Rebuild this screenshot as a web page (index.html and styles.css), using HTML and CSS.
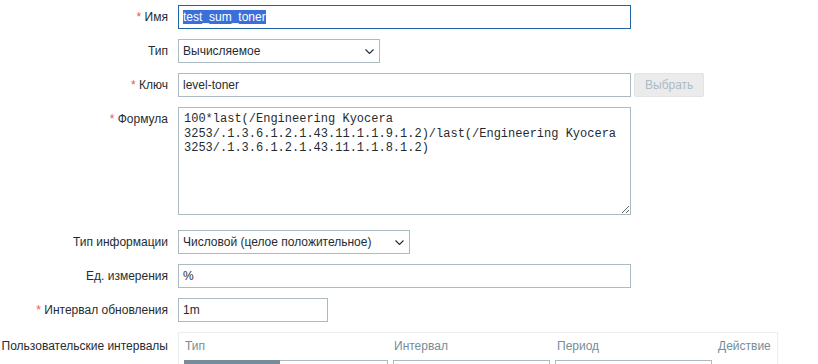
FILE: index.html
```html
<!DOCTYPE html>
<html lang="ru">
<head>
    <meta charset="UTF-8">
    <meta name="viewport" content="width=device-width, initial-scale=1.0">
    <title>Элемент данных</title>
    <link rel="stylesheet" href="styles.css">
</head>
<body>
    <form class="item-form">
        <!-- Имя -->
        <label class="form-label" for="name-input"><span class="req">*</span> Имя</label>
        <div class="form-field">
            <input type="text" id="name-input" class="text-input input-wide input-focused" value="test_sum_toner">
        </div>

        <!-- Тип -->
        <label class="form-label">Тип</label>
        <div class="form-field">
            <div class="select-wrap select-type">
                <select class="select-input">
                    <option>Вычисляемое</option>
                </select>
                <svg class="select-arrow" width="9" height="5" viewBox="0 0 9 5"><path d="M0.5 0.5 L4.5 4.5 L8.5 0.5" fill="none" stroke="#1f2c33" stroke-width="1.1"/></svg>
            </div>
        </div>

        <!-- Ключ -->
        <label class="form-label"><span class="req">*</span> Ключ</label>
        <div class="form-field field-inline">
            <input type="text" class="text-input input-wide" value="level-toner">
            <button type="button" class="btn-alt" disabled>Выбрать</button>
        </div>

        <!-- Формула -->
        <label class="form-label"><span class="req">*</span> Формула</label>
        <div class="form-field">
            <textarea class="formula-input" spellcheck="false">100*last(/Engineering Kyocera 3253/.1.3.6.1.2.1.43.11.1.1.9.1.2)/last(/Engineering Kyocera 3253/.1.3.6.1.2.1.43.11.1.1.8.1.2)</textarea>
        </div>

        <!-- Тип информации -->
        <label class="form-label">Тип информации</label>
        <div class="form-field">
            <div class="select-wrap select-info">
                <select class="select-input">
                    <option>Числовой (целое положительное)</option>
                </select>
                <svg class="select-arrow" width="9" height="5" viewBox="0 0 9 5"><path d="M0.5 0.5 L4.5 4.5 L8.5 0.5" fill="none" stroke="#1f2c33" stroke-width="1.1"/></svg>
            </div>
        </div>

        <!-- Ед. измерения -->
        <label class="form-label">Ед. измерения</label>
        <div class="form-field">
            <input type="text" class="text-input input-wide" value="%">
        </div>

        <!-- Интервал обновления -->
        <label class="form-label"><span class="req">*</span> Интервал обновления</label>
        <div class="form-field">
            <input type="text" class="text-input input-small" value="1m">
        </div>

        <!-- Пользовательские интервалы -->
        <label class="form-label label-table">Пользовательские интервалы</label>
        <div class="form-field">
            <div class="intervals-table">
                <div class="th">Тип</div>
                <div class="th">Интервал</div>
                <div class="th">Период</div>
                <div class="th">Действие</div>

                <div class="radio-list">
                    <span class="radio-item selected">Гибкий</span>
                    <span class="radio-item">По расписанию</span>
                </div>
                <input type="text" class="text-input" value="50s">
                <input type="text" class="text-input" value="1-7,00:00-24:00">
                <div class="action-cell"><span class="link-btn">Удалить</span></div>
            </div>
        </div>
    </form>

    <script src="script.js"></script>
</body>
</html>
```

FILE: styles.css
```css
body {
    margin: 0;
    padding: 5px 0 0 0;
    font-family: "Liberation Sans", Arial, sans-serif;
    font-size: 12px;
    color: #1f2c33;
    background-color: #ffffff;
}
.item-form {
    display: grid;
    grid-template-columns: 168px 1fr;
    column-gap: 10px;
    row-gap: 10px;
    align-items: start;
}
.form-label {
    line-height: 24px;
    text-align: right;
    white-space: nowrap;
}
.req {
    color: #e45959;
}
.form-field {
    min-width: 0;
}
.field-inline {
    display: flex;
    gap: 3px;
}
.text-input {
    box-sizing: border-box;
    height: 24px;
    padding: 0 4px;
    border: 1px solid #acbbc2;
    border-radius: 0;
    background-color: #ffffff;
    font-family: "Liberation Sans", Arial, sans-serif;
    font-size: 12px;
    color: #1f2c33;
    outline: none;
    margin: 0;
}
.input-wide {
    width: 453px;
}
.input-small {
    width: 150px;
}
.input-focused {
    border-color: #1f65a6;
}
.input-focused::selection {
    background-color: #3a6fd9;
    color: #ffffff;
}
.btn-alt {
    box-sizing: border-box;
    height: 24px;
    padding: 0 10px;
    border: 1px solid #dfe4e7;
    border-radius: 2px;
    background-color: #ebebeb;
    color: #acbbc2;
    font-family: "Liberation Sans", Arial, sans-serif;
    font-size: 12px;
    margin: 0;
}
.select-wrap {
    position: relative;
    display: inline-block;
    vertical-align: top;
}
.select-type {
    width: 202px;
}
.select-info {
    width: 232px;
}
.select-input {
    appearance: none;
    -webkit-appearance: none;
    box-sizing: border-box;
    width: 100%;
    height: 24px;
    padding: 0 24px 0 4px;
    border: 1px solid #acbbc2;
    border-radius: 0;
    background-color: #ffffff;
    font-family: "Liberation Sans", Arial, sans-serif;
    font-size: 12px;
    color: #1f2c33;
    outline: none;
    margin: 0;
}
.select-arrow {
    position: absolute;
    right: 6px;
    top: 10px;
    pointer-events: none;
}
.formula-input {
    display: block;
    box-sizing: border-box;
    width: 453px;
    height: 108px;
    margin: 0 0 5px 0;
    padding: 4px 5px;
    border: 1px solid #acbbc2;
    border-radius: 0;
    font-family: "Liberation Mono", "Courier New", monospace;
    font-size: 12px;
    line-height: 14.5px;
    color: #1f2c33;
    outline: none;
    resize: both;
}
.label-table {
    padding-top: 2px;
}
.intervals-table {
    box-sizing: border-box;
    width: 600px;
    padding: 0 5px 5px 5px;
    border: 1px solid #ebeef0;
    display: grid;
    grid-template-columns: 204px 157px 157px auto;
    column-gap: 5px;
    row-gap: 0;
}
.th {
    color: #768d99;
    line-height: 14px;
    padding: 6px 0 7px 1px;
}
.th:nth-child(3) {
    padding-left: 2px;
}
.radio-list {
    display: flex;
    height: 24px;
}
.radio-item {
    box-sizing: border-box;
    height: 24px;
    line-height: 22px;
    border: 1px solid #acbbc2;
    padding: 0 10px;
    background-color: #ffffff;
    text-align: center;
}
.radio-item.selected {
    width: 96px;
    background-color: #768d99;
    border-color: #768d99;
    color: #ffffff;
}
.radio-item:last-child {
    flex: 1;
    border-left: none;
}
.intervals-table .text-input {
    width: 100%;
}
.action-cell {
    line-height: 24px;
}
.link-btn {
    color: #0275b8;
    border-bottom: 1px dotted #0275b8;
}
```

FILE: script.js
```js
// Поле имени в фокусе, текст выделен
const nameInput = document.getElementById('name-input');
nameInput.focus();
nameInput.select();
```
